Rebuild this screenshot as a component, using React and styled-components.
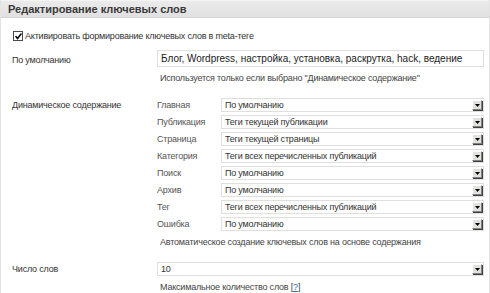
import styled, { createGlobalStyle } from 'styled-components';

const GlobalStyle = createGlobalStyle`
    html, body {
        margin: 0;
        padding: 0;
        background: #fff;
    }
    body {
        font-family: "Liberation Sans", Arial, sans-serif;
        font-size: 9px;
        letter-spacing: -0.2px;
        color: #333;
    }
`

const dynamicRows = [
    { label: 'Главная', value: 'По умолчанию' },
    { label: 'Публикация', value: 'Теги текущей публикации' },
    { label: 'Страница', value: 'Теги текущей страницы' },
    { label: 'Категория', value: 'Теги всех перечисленных публикаций' },
    { label: 'Поиск', value: 'По умолчанию' },
    { label: 'Архив', value: 'По умолчанию' },
    { label: 'Тег', value: 'Теги всех перечисленных публикаций' },
    { label: 'Ошибка', value: 'По умолчанию' },
]

const Arrow = () => (
    <ArrowBtn>
        <svg width="5" height="3" viewBox="0 0 5 3">
            <path d="M0 0H5L2.5 3Z" fill="#000" />
        </svg>
    </ArrowBtn>
)

const Select = ({ value }) => (
    <SelectBox>
        <span>{value}</span>
        <Arrow />
    </SelectBox>
)

const App = () => {
    return (
        <>
            <GlobalStyle />
            <Panel>
                <Header>Редактирование ключевых слов</Header>
                <Body>
                    <CheckRow>
                        <Check>
                            <svg width="7" height="7" viewBox="0 0 7 7">
                                <path d="M0.5 3L2.5 5.5L6.5 0.5" stroke="#000" strokeWidth="1.5" fill="none" />
                            </svg>
                        </Check>
                        Активировать формирование ключевых слов в meta-теге
                    </CheckRow>

                    <Row $top={8}>
                        <Label $pad={4}>По умолчанию</Label>
                        <Field>
                            <TextInput>Блог, Wordpress, настройка, установка, раскрутка, hack, ведение</TextInput>
                            <Hint>Используется только если выбрано "Динамическое содержание"</Hint>
                        </Field>
                    </Row>

                    <Row $top={14}>
                        <Label $pad={1}>Динамическое содержание</Label>
                        <Field>
                            <SubGrid>
                                {dynamicRows.map(r => (
                                    <SubRow key={r.label}>
                                        <SubLabel>{r.label}</SubLabel>
                                        <Select value={r.value} />
                                    </SubRow>
                                ))}
                            </SubGrid>
                            <Hint>Автоматическое создание ключевых слов на основе содержания</Hint>
                        </Field>
                    </Row>

                    <Row $top={14}>
                        <Label $pad={1}>Число слов</Label>
                        <Field>
                            <Select value="10" />
                            <Hint>Максимальное количество слов [<HelpLink>?</HelpLink>]</Hint>
                        </Field>
                    </Row>
                </Body>
            </Panel>
        </>
    )
}

export default App

const Panel = styled.div`
    border-left: 1px solid #e3e3e3;
    border-right: 1px solid #e3e3e3;
    height: 293px;
    box-sizing: border-box;
    overflow: hidden;
`

const Header = styled.h3`
    margin: 0;
    height: 16px;
    line-height: 17px;
    padding: 0 7px;
    font-size: 11px;
    letter-spacing: 0;
    font-weight: bold;
    color: #3a3a3a;
    background: linear-gradient(#ebebeb, #e0e0e0);
    border-top: 1px solid #f4f4f4;
    border-bottom: 1px solid #d6d6d6;
`

const Body = styled.div`
    padding: 12px 5px 0 11px;
`

const CheckRow = styled.label`
    display: flex;
    align-items: center;
    gap: 2px;
    height: 12px;
    line-height: 12px;
`

const Check = styled.span`
    width: 10px;
    height: 10px;
    margin-left: 1px;
    box-sizing: border-box;
    border: 1px solid #4a4a4a;
    background: #fff;
    display: flex;
    align-items: center;
    justify-content: center;
`

const Row = styled.div`
    display: grid;
    grid-template-columns: 145px 1fr;
    margin-top: ${p => p.$top}px;
`

const Label = styled.div`
    padding-top: ${p => p.$pad}px;
    line-height: 12px;
`

const Field = styled.div`
    display: flex;
    flex-direction: column;
`

const TextInput = styled.div`
    height: 17px;
    box-sizing: border-box;
    border: 1px solid #dfdfdf;
    padding: 0 3px;
    font-size: 10px;
    letter-spacing: 0;
    line-height: 15px;
    color: #222;
    white-space: nowrap;
    overflow: hidden;
`

const Hint = styled.div`
    padding: 5px 0 0 3px;
    color: #444;
    line-height: 12px;
`

const HelpLink = styled.span`
    color: #21759b;
    text-decoration: underline;
`

const SubGrid = styled.div`
    display: grid;
    grid-auto-rows: 14px;
    row-gap: 3px;
`

const SubRow = styled.div`
    display: grid;
    grid-template-columns: 64px 1fr;
    align-items: center;
`

const SubLabel = styled.div`
    color: #555;
    line-height: 12px;
`

const SelectBox = styled.div`
    height: 14px;
    box-sizing: border-box;
    border: 1px solid #dfdfdf;
    display: flex;
    align-items: center;
    justify-content: space-between;
    padding: 0 1px 0 3px;
    color: #333;
    line-height: 12px;
    white-space: nowrap;
`

const ArrowBtn = styled.span`
    width: 10px;
    height: 10px;
    box-sizing: border-box;
    background: #e4e2dc;
    border-top: 1px solid #fff;
    border-left: 1px solid #fff;
    border-right: 1px solid #808080;
    border-bottom: 1px solid #808080;
    box-shadow: 1px 1px 0 #404040;
    display: flex;
    align-items: center;
    justify-content: center;
`
